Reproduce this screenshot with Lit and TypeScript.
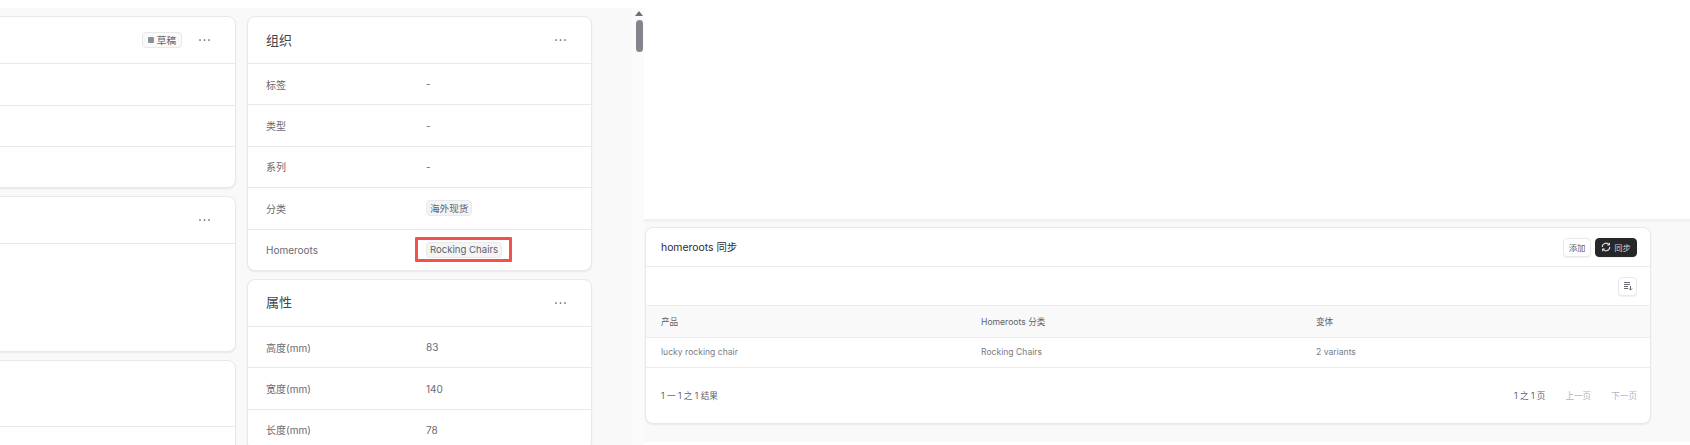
import { LitElement, html, css } from "lit";
import { customElement } from "lit/decorators.js";

const dots = html`<svg class="dots" width="11" height="4" viewBox="0 0 11 4"><circle cx="1" cy="2" r="0.85"/><circle cx="5.5" cy="2" r="0.85"/><circle cx="10" cy="2" r="0.85"/></svg>`;

@customElement("app-root")
export class AppRoot extends LitElement {
  static styles = css`
    :host { display: grid; grid-template-columns: 644px 1046px; width: 1690px; height: 445px; overflow: hidden; background: #fff;
      font-family: Inter, "Noto Sans CJK SC", sans-serif; color: #6a6a74; font-size: 10px; }
    .left { padding-top: 8px; height: 445px; box-sizing: border-box; overflow: hidden; display: flex; }
    .canvas { flex: 1; background: #f9f9fa; display: grid; grid-template-columns: 256px 345px; column-gap: 11px; align-content: start; padding-top: 8px; margin-left: -20px; height: 437px; box-sizing: border-box; overflow: hidden; }
    .col { display: flex; flex-direction: column; gap: 8px; min-width: 0; }
    .card { background: #fff; border: 1px solid #e9e9eb; border-radius: 8px; box-shadow: 0 1px 2px rgba(0,0,0,.07); box-sizing: border-box; flex: none; }
    .head { height: 47px; padding: 0 25px 0 18px; display: flex; align-items: center; justify-content: flex-end; gap: 17px; border-bottom: 1px solid #e9e9eb; box-sizing: border-box; }
    .head.title { justify-content: space-between; }
    .head.tall { height: 66px; }
    .head h2 { margin: 0 0 2px; font-size: 13px; font-weight: 400; color: #45454d; }
    .dots { fill: #55555e; display: block; }
    .row { height: 41.4px; box-sizing: border-box; padding: 0 18px; display: grid; grid-template-columns: 160px 1fr; align-items: center; border-bottom: 1px solid #e9e9eb; }
    .row:last-child { border-bottom: 0; height: 40.4px; }
    .blank { box-sizing: border-box; border-bottom: 1px solid #e9e9eb; }
    .blank:last-child { border-bottom: 0; }
    .badge { display: inline-flex; align-items: center; gap: 3px; height: 16px; box-sizing: border-box; padding: 0 3px; border: 1px solid #e9e9eb; border-radius: 4px; background: #f4f4f5; font-size: 9.6px; color: #61616b; white-space: nowrap; justify-self: start; }
    .draft { background: #fafafa; padding: 0 5px 0 5px; }
    .sq { width: 6px; height: 6px; border-radius: 1px; background: #8f8f98; }
    .mark { justify-self: start; margin-left: -11px; padding: 1.5px 7px 1.5px 8px; border: 3px solid #f4504e; border-radius: 1px; display: flex; line-height: 0; }
    .sb { width: 12px; flex: none; box-sizing: border-box; padding-left: 2px; background: #fbfbfb; display: flex; flex-direction: column; align-items: center; }
    .arrow { width: 0; height: 0; border: 4px solid transparent; border-top: 0; border-bottom: 5px solid #6f6f76; margin: 3px 0 4px; }
    .thumb { width: 7px; height: 32px; border-radius: 3.5px; background: #85838c; }
    .right { display: flex; flex-direction: column; height: 442px; }
    .top { height: 220px; flex: none; box-sizing: border-box; background: #fff; border-bottom: 1px solid #efeff0; }
    .pane { flex: 1; background: #f9f9fa; padding: 7px 39px 0 1px; box-shadow: inset 0 2px 0 #f3f3f4; }
    .sync { height: 197px; width: 1006px; display: flex; flex-direction: column; }
    .sh { height: 39px; flex: none; display: flex; align-items: center; justify-content: space-between; padding: 0 13px 0 15px; border-bottom: 1px solid #ececee; box-sizing: border-box; }
    .sh h3 { margin: 0 0 1px; font-size: 10.4px; font-weight: 400; color: #2b2b30; }
    .btns { display: flex; gap: 4px; }
    .btn { height: 19px; box-sizing: border-box; display: flex; align-items: center; justify-content: center; gap: 3px; border-radius: 4px; font-size: 8.4px; border: 1px solid #e9e9eb; background: #fff; color: #5c5c66; box-shadow: 0 1px 1px rgba(0,0,0,.06); }
    .add { width: 28px; }
    .go { width: 42px; background: #27272a; border-color: #27272a; color: #d4d4d8; }
    .tools { height: 39px; flex: none; display: flex; align-items: center; justify-content: flex-end; padding-right: 13px; box-sizing: border-box; border-bottom: 1px solid #ececee; }
    .ic { width: 19px; }
    .tr { display: grid; grid-template-columns: 320px 335px 1fr; align-items: center; padding: 0 0 1px 15px; box-sizing: border-box; font-size: 8.6px; flex: none; }
    .th { height: 32px; background: #f9f9fa; border-bottom: 1px solid #ececee; color: #5f5f69; }
    .td { height: 30px; border-bottom: 1px solid #ececee; color: #7a7a84; }
    .foot { flex: 1; display: flex; align-items: center; justify-content: space-between; padding: 0 13px 2px 15px; font-size: 8.6px; color: #5f5f69; }
    .pages { display: flex; gap: 20px; }
    .off { color: #b4b4ba; }
  `;

  row(label: string, value: unknown) {
    return html`<div class="row"><span>${label}</span>${value}</div>`;
  }

  render() {
    return html`
      <div class="left">
        <div class="canvas">
          <div class="col">
            <div class="card" style="height:172px">
              <div class="head"><span class="badge draft"><i class="sq"></i>草稿</span>${dots}</div>
              <div class="blank" style="height:42px"></div>
              <div class="blank" style="height:41px"></div>
              <div class="blank" style="height:41px"></div>
            </div>
            <div class="card" style="height:156px">
              <div class="head">${dots}</div>
            </div>
            <div class="card" style="height:120px">
              <div class="head tall"></div>
            </div>
          </div>
          <div class="col">
            <div class="card">
              <div class="head title"><h2>组织</h2>${dots}</div>
              ${this.row("标签", "-")}
              ${this.row("类型", "-")}
              ${this.row("系列", "-")}
              ${this.row("分类", html`<span class="badge">海外现货</span>`)}
              ${this.row("Homeroots", html`<div class="mark"><span class="badge">Rocking Chairs</span></div>`)}
            </div>
            <div class="card">
              <div class="head title"><h2>属性</h2>${dots}</div>
              ${this.row("高度(mm)", "83")}
              ${this.row("宽度(mm)", "140")}
              ${this.row("长度(mm)", "78")}
            </div>
          </div>
        </div>
        <div class="sb"><i class="arrow"></i><i class="thumb"></i></div>
      </div>
      <div class="right">
        <div class="top"></div>
        <div class="pane">
          <div class="card sync">
            <div class="sh">
              <h3>homeroots 同步</h3>
              <div class="btns">
                <div class="btn add">添加</div>
                <div class="btn go">
                  <svg width="10" height="10" viewBox="0 0 12 12" fill="none" stroke="#e2e2e6" stroke-width="1.4"><path d="M1.5 6A4.5 4.5 0 0 1 9.6 3.3M10.5 6A4.5 4.5 0 0 1 2.4 8.7"/><path d="M10 1v2.6H7.4M2 11V8.4h2.6"/></svg>同步
                </div>
              </div>
            </div>
            <div class="tools">
              <div class="btn ic">
                <svg width="10" height="10" viewBox="0 0 10 10" fill="none" stroke="#6a6a74" stroke-width="1"><path d="M1 1.5h6M1 3.5h6M1 5.5h4M1 7.5h4M7.5 5v4M6 7.6l1.5 1.5L9 7.6"/></svg>
              </div>
            </div>
            <div class="tr th"><span>产品</span><span>Homeroots 分类</span><span>变体</span></div>
            <div class="tr td"><span>lucky rocking chair</span><span>Rocking Chairs</span><span>2 variants</span></div>
            <div class="foot">
              <span>1 一 1 之 1 结果</span>
              <div class="pages"><span>1 之 1 页</span><span class="off">上一页</span><span class="off">下一页</span></div>
            </div>
          </div>
        </div>
      </div>
    `;
  }
}
